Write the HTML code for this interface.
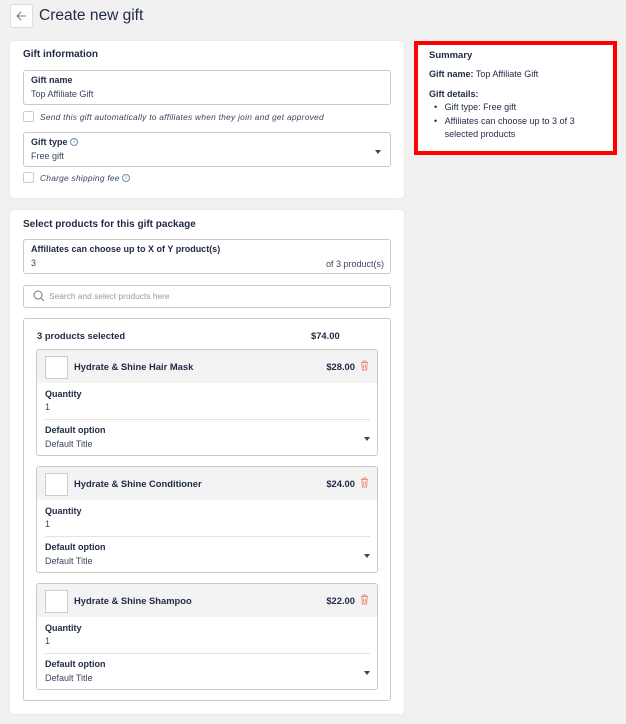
<!DOCTYPE html>
<html><head><meta charset="utf-8"><style>
*{margin:0;padding:0;box-sizing:border-box}
body{width:626px;height:724px;background:#f1f1f1;font-family:"Liberation Sans",sans-serif;color:#1f2a44;position:relative;overflow:hidden}
.a{position:absolute}
.card{position:absolute;background:#fff;border-radius:4px;box-shadow:0 0 2px rgba(0,0,0,.08)}
.box{position:absolute;border:1px solid #c9c9c9;border-radius:3px;background:#fff}
.lbl{position:absolute;font-size:9px;font-weight:bold;color:#1f2a44;white-space:nowrap}
.val{position:absolute;font-size:9px;color:#3a4660;white-space:nowrap}
.h{position:absolute;font-size:10px;font-weight:bold;white-space:nowrap}
.cb{position:absolute;width:11px;height:11px;border:1px solid #ccc;border-radius:2px}
.it{position:absolute;font-size:8.4px;font-style:italic;color:#3a4660;white-space:nowrap;letter-spacing:.25px}
.arr{position:absolute;width:0;height:0;border-left:3px solid transparent;border-right:3px solid transparent;border-top:4px solid #444}
.info{position:absolute;width:8px;height:8px;border:1px solid #6a8fc0;border-radius:50%;font-size:6px;line-height:6px;text-align:center;color:#6a8fc0}
.prod{position:absolute;left:36px;width:342px;height:107px;border:1px solid #c9c9c9;border-radius:3px;background:#fff;overflow:hidden}
.ph{position:absolute;left:0;top:0;width:100%;height:33px;background:#f3f3f3}
.img{position:absolute;left:8px;top:6px;width:23px;height:23px;border:1px solid #ccc;background:#fff}
.pn{position:absolute;left:37px;top:11px;font-size:9.4px;font-weight:bold;white-space:nowrap}
.pp{position:absolute;right:22px;top:11px;font-size:9.4px;font-weight:bold}
</style></head><body>
<div class="a" style="left:10px;top:4px;width:23px;height:24px;background:#fff;border:1px solid #ddd;border-radius:3px">
<svg width="21" height="22" viewBox="0 0 21 22"><path d="M15 11H6M10 7l-4 4 4 4" stroke="#6a7890" stroke-width="1" fill="none"/></svg></div>
<div class="a" style="left:39px;top:7px;font-size:15.5px;color:#1f2a44">Create new gift</div>

<div class="card" style="left:10px;top:41px;width:394px;height:157px">
<div class="h" style="left:13px;top:8px">Gift information</div>
<div class="box" style="left:13px;top:29px;width:368px;height:35px"></div>
<div class="lbl" style="left:21px;top:34px">Gift name</div>
<div class="val" style="left:21px;top:48px">Top Affiliate Gift</div>
<div class="cb" style="left:13px;top:70px"></div>
<div class="it" style="left:30px;top:71px">Send this gift automatically to affiliates when they join and get approved</div>
<div class="box" style="left:13px;top:91px;width:368px;height:35px"></div>
<div class="lbl" style="left:21px;top:96px">Gift type</div>
<div class="info" style="left:60px;top:97px">i</div>
<div class="val" style="left:21px;top:110px">Free gift</div>
<div class="arr" style="left:365px;top:109px"></div>
<div class="cb" style="left:13px;top:131px"></div>
<div class="it" style="left:30px;top:132px">Charge shipping fee</div>
<div class="info" style="left:112px;top:133px">i</div>
</div>

<div class="a" style="left:414px;top:41px;width:203px;height:114px;background:#fff;border:4px solid #f00"></div>
<div class="h" style="left:429px;top:50px;font-size:9.5px">Summary</div>
<div class="a" style="left:429px;top:69px;font-size:9px;white-space:nowrap"><b>Gift name:</b> Top Affiliate Gift</div>
<div class="lbl" style="left:429px;top:89px">Gift details:</div>
<div class="a" style="left:434px;top:101px;font-size:9px;line-height:13.5px;width:160px">
<div>•&nbsp;&nbsp;&nbsp;Gift type: Free gift</div>
<div style="display:flex"><span>•&nbsp;&nbsp;&nbsp;</span><span>Affiliates can choose up to 3 of 3 selected products</span></div></div>

<div class="card" style="left:10px;top:210px;width:394px;height:504px">
<div class="h" style="left:13px;top:9px">Select products for this gift package</div>
<div class="box" style="left:13px;top:29px;width:368px;height:35px"></div>
<div class="lbl" style="left:21px;top:34px">Affiliates can choose up to X of Y product(s)</div>
<div class="val" style="left:21px;top:48px">3</div>
<div class="val" style="right:20px;top:49px">of 3 product(s)</div>
<div class="box" style="left:13px;top:75px;width:368px;height:23px"></div>
<svg class="a" style="left:23px;top:80px" width="12" height="12" viewBox="0 0 12 12"><circle cx="5" cy="5" r="4" stroke="#777" fill="none"/><path d="M8 8l3 3" stroke="#777"/></svg>
<div class="val" style="left:39px;top:81px;color:#999;font-size:8.4px">Search and select products here</div>
<div class="box" style="left:13px;top:108px;width:368px;height:383px"></div>
<div class="h" style="left:27px;top:120px;font-size:9.4px">3 products selected</div>
<div class="h" style="left:301px;top:120px;font-size:9.4px">$74.00</div>
</div>

<div class="prod" style="top:349px"><div class="ph"></div><div class="img"></div>
<div class="pn">Hydrate &amp; Shine Hair Mask</div>
<div class="pp">$28.00</div>
<svg class="a" style="left:323px;top:10px" width="9" height="11" viewBox="0 0 9 11"><path d="M1 2.5h7M3 2.5V1h3v1.5M1.8 3l.6 7h4.2l.6-7M3.6 4.5v4M5.4 4.5v4" stroke="#f08a7a" fill="none" stroke-width=".9"/></svg>
<div class="lbl" style="left:8px;top:39px">Quantity</div><div class="val" style="left:8px;top:52px">1</div>
<div class="a" style="left:8px;top:69px;width:325px;height:1px;background:#e3e3e3"></div>
<div class="lbl" style="left:8px;top:75px">Default option</div><div class="val" style="left:8px;top:89px">Default Title</div>
<div class="arr" style="left:327px;top:87px"></div></div>

<div class="prod" style="top:466px"><div class="ph"></div><div class="img"></div>
<div class="pn">Hydrate &amp; Shine Conditioner</div>
<div class="pp">$24.00</div>
<svg class="a" style="left:323px;top:10px" width="9" height="11" viewBox="0 0 9 11"><path d="M1 2.5h7M3 2.5V1h3v1.5M1.8 3l.6 7h4.2l.6-7M3.6 4.5v4M5.4 4.5v4" stroke="#f08a7a" fill="none" stroke-width=".9"/></svg>
<div class="lbl" style="left:8px;top:39px">Quantity</div><div class="val" style="left:8px;top:52px">1</div>
<div class="a" style="left:8px;top:69px;width:325px;height:1px;background:#e3e3e3"></div>
<div class="lbl" style="left:8px;top:75px">Default option</div><div class="val" style="left:8px;top:89px">Default Title</div>
<div class="arr" style="left:327px;top:87px"></div></div>

<div class="prod" style="top:583px"><div class="ph"></div><div class="img"></div>
<div class="pn">Hydrate &amp; Shine Shampoo</div>
<div class="pp">$22.00</div>
<svg class="a" style="left:323px;top:10px" width="9" height="11" viewBox="0 0 9 11"><path d="M1 2.5h7M3 2.5V1h3v1.5M1.8 3l.6 7h4.2l.6-7M3.6 4.5v4M5.4 4.5v4" stroke="#f08a7a" fill="none" stroke-width=".9"/></svg>
<div class="lbl" style="left:8px;top:39px">Quantity</div><div class="val" style="left:8px;top:52px">1</div>
<div class="a" style="left:8px;top:69px;width:325px;height:1px;background:#e3e3e3"></div>
<div class="lbl" style="left:8px;top:75px">Default option</div><div class="val" style="left:8px;top:89px">Default Title</div>
<div class="arr" style="left:327px;top:87px"></div></div>
</body></html>
